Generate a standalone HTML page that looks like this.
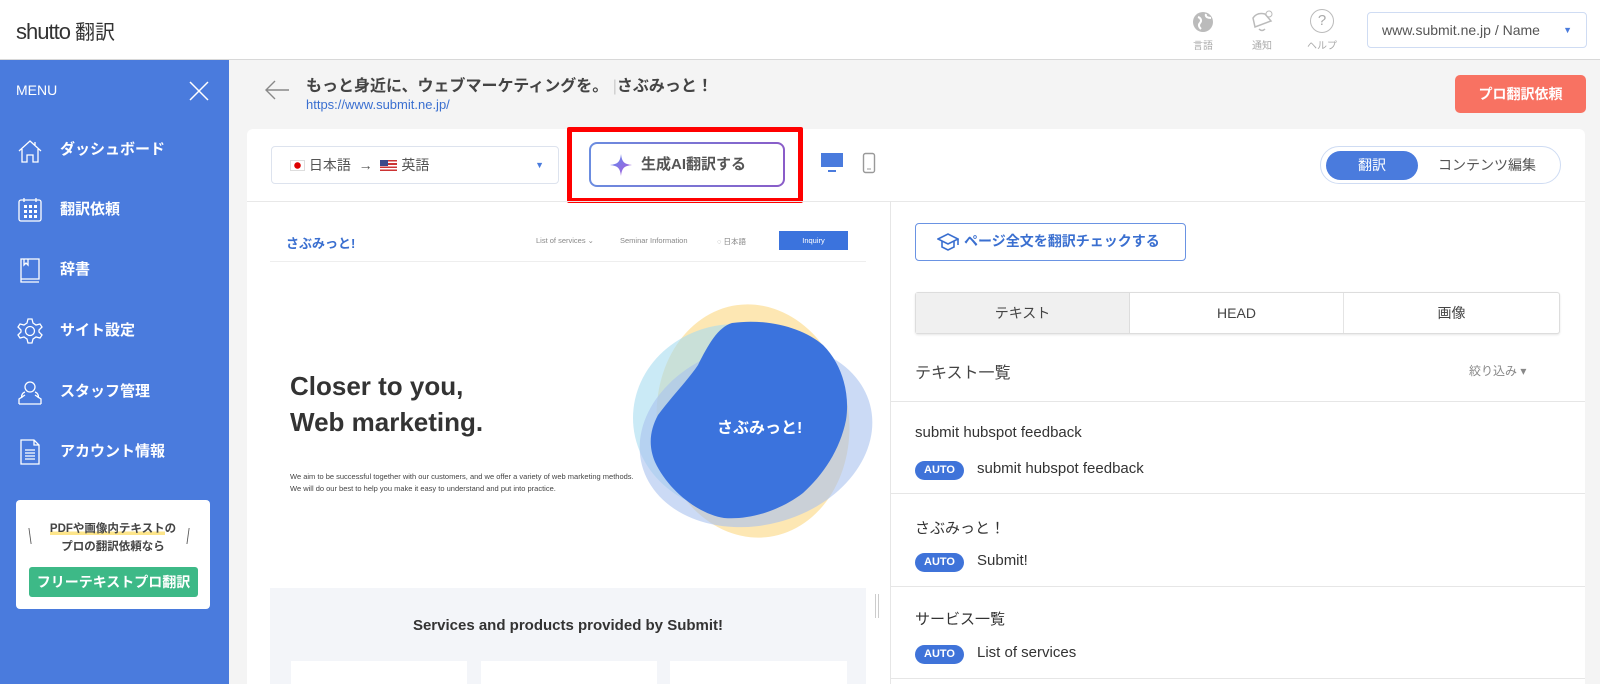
<!DOCTYPE html>
<html><head><meta charset="utf-8"><style>
*{box-sizing:border-box;margin:0;padding:0}
html,body{overflow:hidden}
body{width:1600px;height:684px;background:#f4f4f4;font-family:"Liberation Sans","Noto Sans CJK JP",sans-serif;color:#333;position:relative}
.a{position:absolute}
.hdr{left:0;top:0;width:1600px;height:60px;background:#fff;border-bottom:1px solid #d8d8d8}
.side{left:0;top:60px;width:229px;height:624px;background:#4a7bdd}
.mi{left:60px;color:#fff;font-size:15px;font-weight:bold;line-height:20px}
.ic{left:17px;width:26px;height:26px}
.hi{text-align:center;font-size:10px;color:#aaa;width:40px}
.panel{left:247px;top:129px;width:1338px;height:555px;background:#fff;border-radius:6px 6px 0 0}
.row{left:890px;width:695px;border-top:1px solid #e6e6e6}
.auto{left:915px;width:49px;height:19px;border-radius:10px;background:#3f73d9;color:#fff;font-size:11px;font-weight:bold;text-align:center;line-height:19px}
.rt{left:915px;font-size:15px;color:#333}
.at{left:977px;font-size:15px;color:#333}
</style></head><body>
<div class="a hdr"></div>
<div class="a" style="left:16px;top:16px;font-size:22px;color:#333;letter-spacing:-1px">shutto <span style="font-size:20px;letter-spacing:0">翻訳</span></div>
<svg class="a" style="left:1192px;top:11px" width="22" height="22" viewBox="0 0 22 22"><circle cx="11" cy="11" r="10" fill="#bbb"/><path d="M6 6c3 1 4 4 2 6s-1 4 1 6M14 3c-1 3 2 4 5 4" stroke="#fff" stroke-width="2" fill="none"/></svg>
<div class="a hi" style="left:1183px;top:37px">言語</div>
<svg class="a" style="left:1249px;top:9px" width="26" height="26" viewBox="0 0 26 26"><path d="M6 18 L4 9 Q8 3 16 5 L22 12 Z M10 20 q3 3 6 0" stroke="#bbb" stroke-width="1.5" fill="none"/><circle cx="20" cy="5" r="3" stroke="#bbb" fill="none"/></svg>
<div class="a hi" style="left:1242px;top:37px">通知</div>
<div class="a" style="left:1310px;top:9px;width:24px;height:24px;border:1.5px solid #bbb;border-radius:50%;color:#aaa;font-size:15px;text-align:center;line-height:21px">?</div>
<div class="a hi" style="left:1302px;top:37px">ヘルプ</div>
<div class="a" style="left:1367px;top:12px;width:220px;height:36px;border:1px solid #cfdcf3;border-radius:4px;font-size:14px;color:#555;line-height:34px;padding-left:14px">www.submit.ne.jp / Name<span style="position:absolute;right:14px;top:0;color:#4a7bdd;font-size:9px">▼</span></div>

<div class="a side"></div>
<div class="a" style="left:16px;top:82px;color:#fff;font-size:14px">MENU</div>
<svg class="a" style="left:189px;top:81px" width="20" height="20" viewBox="0 0 20 20"><path d="M1 1L19 19M19 1L1 19" stroke="#fff" stroke-width="1.5"/></svg>
<svg class="a ic" style="top:138px" viewBox="0 0 26 26" fill="none" stroke="#fff" stroke-width="1.3"><path d="M2 13L13 3l11 10M5 11v13h5v-7h6v7h5V11M18 4v3"/></svg>
<div class="a mi" style="top:140px">ダッシュボード</div>
<svg class="a ic" style="top:197px" viewBox="0 0 26 26" fill="none" stroke="#fff" stroke-width="1.3"><rect x="2" y="3" width="22" height="21" rx="2"/><path d="M7 1v4M19 1v4" /><g fill="#fff" stroke="none"><rect x="7" y="8" width="3" height="3"/><rect x="12" y="8" width="3" height="3"/><rect x="17" y="8" width="3" height="3"/><rect x="7" y="13" width="3" height="3"/><rect x="12" y="13" width="3" height="3"/><rect x="17" y="13" width="3" height="3"/><rect x="7" y="18" width="3" height="3"/><rect x="12" y="18" width="3" height="3"/><rect x="17" y="18" width="3" height="3"/></g></svg>
<div class="a mi" style="top:200px">翻訳依頼</div>
<svg class="a ic" style="top:257px" viewBox="0 0 26 26" fill="none" stroke="#fff" stroke-width="1.3"><path d="M4 2h18v20H4zM4 22v3h18M7 2v6l2-2 2 2V2"/></svg>
<div class="a mi" style="top:260px">辞書</div>
<svg class="a ic" style="top:318px" viewBox="0 0 26 26" fill="none" stroke="#fff" stroke-width="1.3"><circle cx="13" cy="13" r="4.5"/><path d="M11 1h4l1 4 3 2 4-1 2 3-3 3v2l3 3-2 3-4-1-3 2-1 4h-4l-1-4-3-2-4 1-2-3 3-3v-2l-3-3 2-3 4 1 3-2z"/></svg>
<div class="a mi" style="top:321px">サイト設定</div>
<svg class="a ic" style="top:379px" viewBox="0 0 26 26" fill="none" stroke="#fff" stroke-width="1.3"><circle cx="13" cy="8" r="5"/><path d="M2 25v-5l6-4M24 25v-5l-6-4M2 25h22M8 13c-3 1-4 4-3 6M18 13c3 1 4 4 3 6"/></svg>
<div class="a mi" style="top:382px">スタッフ管理</div>
<svg class="a ic" style="top:439px" viewBox="0 0 26 26" fill="none" stroke="#fff" stroke-width="1.3"><path d="M4 1h13l5 5v19H4zM17 1v5h5M8 11h10M8 14h10M8 17h10M8 20h10"/></svg>
<div class="a mi" style="top:442px">アカウント情報</div>
<div class="a" style="left:16px;top:500px;width:194px;height:109px;background:#fff;border-radius:4px"></div>
<div class="a" style="left:16px;top:520px;width:194px;text-align:center;font-size:11.5px;font-weight:bold;color:#444;line-height:18px"><span style="background:linear-gradient(transparent 70%,#fde58a 70%)">PDFや画像内テキスト</span>の<br>プロの翻訳依頼なら</div>
<div class="a" style="left:27px;top:524px;font-size:22px;color:#555;transform:scaleX(.5)">\</div>
<div class="a" style="left:185px;top:524px;font-size:22px;color:#555;transform:scaleX(.5)">/</div>
<div class="a" style="left:29px;top:567px;width:169px;height:30px;background:#3db987;border-radius:3px;color:#fff;font-size:14px;font-weight:bold;text-align:center;line-height:30px">フリーテキストプロ翻訳</div>

<svg class="a" style="left:264px;top:80px" width="26" height="20" viewBox="0 0 26 20"><path d="M25 10H2M11 1L2 10l9 9" stroke="#888" stroke-width="1.4" fill="none"/></svg>
<div class="a" style="left:306px;top:72px;font-size:16px;font-weight:bold;color:#444">もっと身近に、ウェブマーケティングを。 <span style="color:#ccc;font-weight:normal">|</span>さぶみっと！</div>
<div class="a" style="left:306px;top:97px;font-size:13px;color:#3a6fd0">https://www.submit.ne.jp/</div>
<div class="a" style="left:1455px;top:75px;width:131px;height:38px;background:#f87262;border-radius:5px;color:#fff;font-size:14px;font-weight:bold;text-align:center;line-height:38px">プロ翻訳依頼</div>

<div class="a panel"></div>
<div class="a" style="left:271px;top:146px;width:288px;height:38px;border:1px solid #dde3ee;border-radius:4px;font-size:14px;color:#555;line-height:36px;padding-left:18px"><span style="display:inline-block;width:15px;height:11px;border:1px solid #ddd;background:radial-gradient(circle,#d00 3px,#fff 3.5px);vertical-align:-1px"></span> 日本語 &nbsp;→&nbsp; <span style="display:inline-block;width:17px;height:11px;background:repeating-linear-gradient(#c33 0 1.6px,#fff 1.6px 3.2px);position:relative;vertical-align:-1px"><span style="position:absolute;left:0;top:0;width:8px;height:6px;background:#3a4a8a"></span></span> 英語<span style="position:absolute;right:14px;top:0;color:#4a7bdd;font-size:9px">▼</span></div>
<div class="a" style="left:567px;top:127px;width:236px;height:76px;border:5px solid #f00;border-radius:2px"></div>
<div class="a" style="left:589px;top:142px;width:196px;height:45px;border-radius:8px;background:linear-gradient(90deg,#6b8de0,#8a5cc8);padding:2px"><div style="background:#fff;border-radius:6px;height:100%;font-size:15px;font-weight:bold;color:#555;line-height:41px;padding-left:50px">生成AI翻訳する</div></div>
<svg class="a" style="left:609px;top:153px" width="24" height="24" viewBox="0 0 24 24"><defs><linearGradient id="g" x1="0" y1="0" x2="1" y2="1"><stop offset="0" stop-color="#5a8ef0"/><stop offset="1" stop-color="#b25ad8"/></linearGradient></defs><path d="M12 1C13 9 15 11 23 12 15 13 13 15 12 23 11 15 9 13 1 12 9 11 11 9 12 1z" fill="url(#g)"/></svg>
<svg class="a" style="left:820px;top:152px" width="24" height="22" viewBox="0 0 24 22"><rect x="1" y="1" width="22" height="14" fill="#4a7bdd"/><path d="M8 19h8" stroke="#4a7bdd" stroke-width="2"/></svg>
<svg class="a" style="left:862px;top:152px" width="14" height="22" viewBox="0 0 14 22"><rect x="1.5" y="1.5" width="11" height="19" rx="2" fill="none" stroke="#999" stroke-width="1.4"/><path d="M5 17h4" stroke="#999"/></svg>
<div class="a" style="left:1320px;top:146px;width:241px;height:38px;border:1px solid #cfdcf3;border-radius:19px"></div>
<div class="a" style="left:1326px;top:151px;width:92px;height:29px;background:#4a7bdd;border-radius:15px;color:#fff;font-size:14px;text-align:center;line-height:29px">翻訳</div>
<div class="a" style="left:1438px;top:155px;font-size:14px;color:#555">コンテンツ編集</div>
<div class="a" style="left:247px;top:201px;width:1338px;border-top:1px solid #e8e8e8"></div>
<div class="a" style="left:890px;top:201px;height:490px;border-left:1px solid #e6e6e6"></div>

<div class="a" style="left:286px;top:233px;font-size:13px;font-weight:bold;color:#3a6fd0">さぶみっと!</div>
<div class="a" style="left:536px;top:236px;font-size:7.5px;color:#888">List of services ⌄</div>
<div class="a" style="left:620px;top:236px;font-size:7.5px;color:#888">Seminar Information</div>
<div class="a" style="left:717px;top:236px;font-size:7.5px;color:#888">◌ 日本語</div>
<div class="a" style="left:779px;top:231px;width:69px;height:19px;background:#3b73dd;color:#fff;font-size:7.5px;text-align:center;line-height:19px">Inquiry</div>
<div class="a" style="left:270px;top:261px;width:596px;border-top:1px solid #eee"></div>
<svg class="a" style="left:628px;top:300px" width="250" height="250" viewBox="0 0 250 250">
<ellipse cx="125" cy="121" rx="96" ry="117" transform="rotate(-8 125 121)" fill="#fde3a6" opacity=".85"/>
<ellipse cx="108" cy="118" rx="103" ry="94" fill="#a6dcf0" opacity=".6"/>
<ellipse cx="128" cy="135" rx="118" ry="90" transform="rotate(-15 128 135)" fill="#a9c1ef" opacity=".6"/>
<path d="M104 23C140 18 175 28 195 45 215 65 222 95 218 120 212 150 195 175 175 193 150 212 120 220 96 218 70 214 40 190 27 162 20 145 22 130 30 115 45 95 60 80 70 65 80 45 90 27 104 23z" fill="#3b73dd"/>
</svg>
<div class="a" style="left:717px;top:414px;font-size:16px;font-weight:bold;color:#fff">さぶみっと!</div>
<div class="a" style="left:290px;top:368px;font-size:26px;font-weight:bold;color:#333;line-height:36px">Closer to you,<br>Web marketing.</div>
<div class="a" style="left:290px;top:471px;font-size:7.5px;color:#444;line-height:12px">We aim to be successful together with our customers, and we offer a variety of web marketing methods.<br>We will do our best to help you make it easy to understand and put into practice.</div>
<div class="a" style="left:270px;top:588px;width:596px;height:100px;background:#f3f5f9"></div>
<div class="a" style="left:270px;top:617px;width:596px;text-align:center;font-size:15px;font-weight:bold;color:#333">Services and products provided by Submit!</div>
<div class="a" style="left:291px;top:661px;width:176px;height:23px;background:#fff"></div>
<div class="a" style="left:481px;top:661px;width:176px;height:23px;background:#fff"></div>
<div class="a" style="left:670px;top:661px;width:177px;height:23px;background:#fff"></div>
<div class="a" style="left:875px;top:594px;width:4px;height:24px;border-left:1px solid #ccc;border-right:1px solid #ccc"></div>

<div class="a" style="left:915px;top:223px;width:271px;height:38px;border:1.5px solid #6a93e3;border-radius:4px;color:#3a6fd0;font-size:14px;font-weight:bold;line-height:35px;padding-left:48px">ページ全文を翻訳チェックする</div>
<svg class="a" style="left:937px;top:232px" width="22" height="20" viewBox="0 0 22 20"><path d="M1 7l10-5 10 5-10 5zM5 9v6l6 3 6-3V9M21 7v6" stroke="#3a6fd0" stroke-width="1.6" fill="none"/></svg>
<div class="a" style="left:915px;top:292px;width:645px;height:42px;border:1px solid #ddd;border-radius:3px;box-shadow:0 1px 2px rgba(0,0,0,.1);background:#fff"></div>
<div class="a" style="left:916px;top:293px;width:214px;height:40px;background:#f0f0f0;border-right:1px solid #ddd;text-align:center;line-height:40px;font-size:14px;color:#444">テキスト</div>
<div class="a" style="left:1130px;top:293px;width:214px;height:40px;border-right:1px solid #e4e4e4;text-align:center;line-height:40px;font-size:14px;color:#444">HEAD</div>
<div class="a" style="left:1344px;top:293px;width:215px;height:40px;text-align:center;line-height:40px;font-size:14px;color:#444">画像</div>
<div class="a" style="left:915px;top:359px;font-size:16px;color:#444">テキスト一覧</div>
<div class="a" style="left:1469px;top:362px;font-size:12px;color:#888">絞り込み ▾</div>
<div class="a row" style="top:401px"></div>
<div class="a rt" style="top:424px">submit hubspot feedback</div>
<div class="a auto" style="top:461px">AUTO</div><div class="a at" style="top:460px">submit hubspot feedback</div>
<div class="a row" style="top:493px"></div>
<div class="a rt" style="top:517px">さぶみっと！</div>
<div class="a auto" style="top:553px">AUTO</div><div class="a at" style="top:552px">Submit!</div>
<div class="a row" style="top:586px"></div>
<div class="a rt" style="top:608px">サービス一覧</div>
<div class="a auto" style="top:645px">AUTO</div><div class="a at" style="top:644px">List of services</div>
<div class="a row" style="top:678px"></div>
</body></html>
